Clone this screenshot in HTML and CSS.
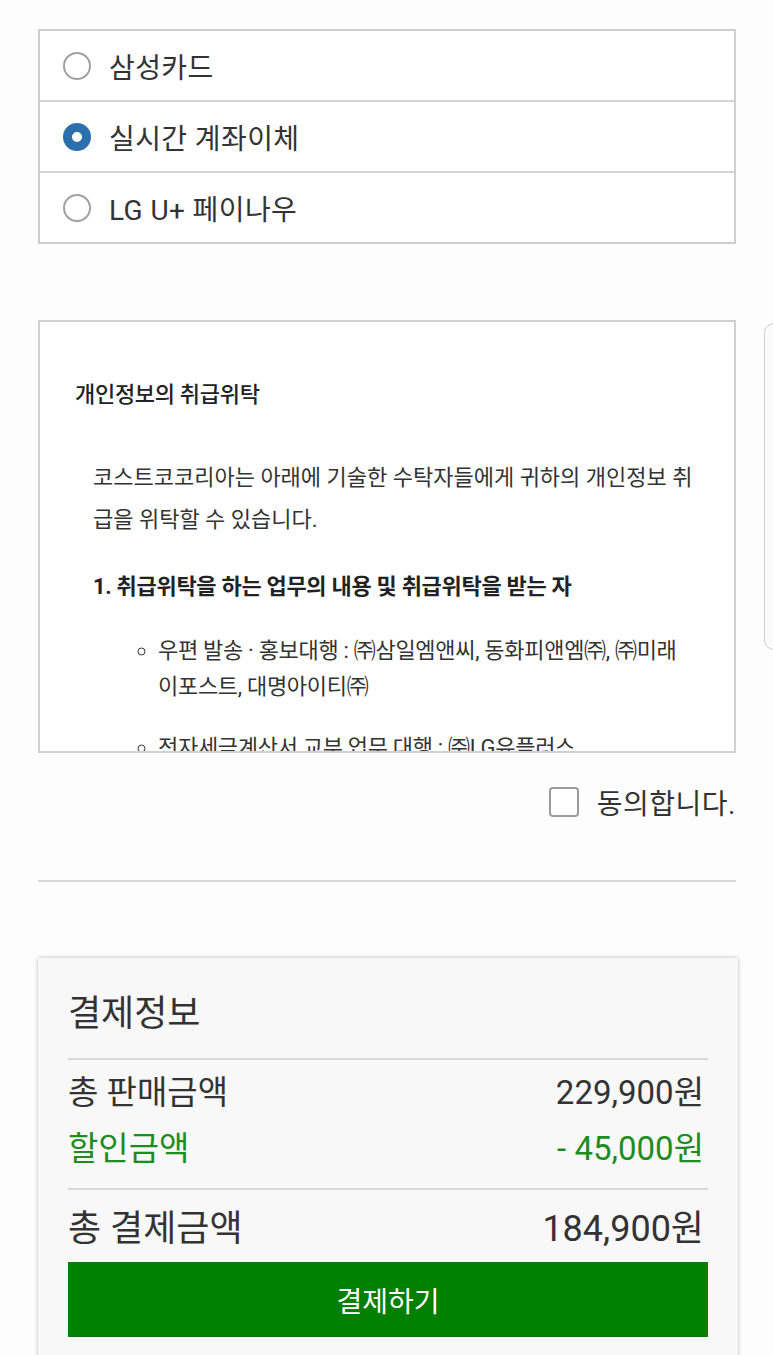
FILE: index.html
```html
<!DOCTYPE html>
<html lang="ko">
<head>
<meta charset="utf-8">
<title>결제</title>
<link rel="stylesheet" href="styles.css">
</head>
<body>
<div class="page">
  <div class="methods">
    <label class="method"><span class="radio"></span><span class="method-label">삼성카드</span></label>
    <label class="method"><span class="radio checked"></span><span class="method-label">실시간 계좌이체</span></label>
    <label class="method"><span class="radio"></span><span class="method-label">LG U+ 페이나우</span></label>
  </div>

  <div class="terms">
    <h3 class="terms-title">개인정보의 취급위탁</h3>
    <p class="terms-text">코스트코코리아는 아래에 기술한 수탁자들에게 귀하의 개인정보 취급을 위탁할 수 있습니다.</p>
    <p class="terms-head">1. 취급위탁을 하는 업무의 내용 및 취급위탁을 받는 자</p>
    <ul class="terms-list">
      <li>우편 발송 · 홍보대행 : ㈜삼일엠앤씨, 동화피앤엠㈜, ㈜미래이포스트, 대명아이티㈜</li>
      <li>전자세금계산서 교부 업무 대행 : ㈜LG유플러스</li>
    </ul>
  </div>

  <div class="agree">
    <span class="checkbox"></span><span class="agree-label">동의합니다.</span>
  </div>

  <hr class="divider">

  <div class="summary">
    <h2 class="summary-title">결제정보</h2>
    <div class="rows">
      <div class="row"><span>총 판매금액</span><span>229,900원</span></div>
      <div class="row discount"><span>할인금액</span><span>- 45,000원</span></div>
    </div>
    <div class="row total"><span>총 결제금액</span><span>184,900원</span></div>
    <button class="pay">결제하기</button>
  </div>
</div>
<div class="edge-handle"></div>
</body>
</html>
```
FILE: styles.css
```css
html, body {
  margin: 0;
  padding: 0;
  background: #fdfdfd;
}
body {
  font-family: Roboto, "Noto Sans CJK KR", sans-serif;
  color: #2b2b2b;
  height: 1355px;
  overflow: hidden;
}
.page {
  width: 698px;
  margin-left: 38px;
  padding-top: 29px;
}
.methods {
  border: 2px solid #cfcfcf;
  background: #fff;
}
.method {
  display: flex;
  align-items: center;
  height: 69px;
  padding-left: 23px;
  border-top: 2px solid #d3d3d3;
}
.method:first-child {
  border-top: none;
}
.radio {
  width: 24px;
  height: 24px;
  border: 2px solid #a0a0a0;
  border-radius: 50%;
  box-sizing: content-box;
  flex: none;
  background: #fff;
}
.radio.checked {
  border: 9px solid #2c6fad;
  width: 10px;
  height: 10px;
}
.method-label {
  margin-left: 18px;
  font-size: 28px;
  color: #333;
  letter-spacing: 0.4px;
}
.terms {
  margin-top: 76px;
  height: 433px;
  border: 2px solid #d0d0d0;
  background: #fff;
  overflow: hidden;
  padding: 0 30px 0 35px;
  box-sizing: border-box;
}
.terms-title {
  margin: 58px 0 0;
  font-size: 22px;
  font-weight: 500;
  line-height: 30px;
  color: #222;
  letter-spacing: -0.3px;
}
.terms-text {
  margin: 47px 0 0 18px;
  font-size: 22px;
  line-height: 42px;
  color: #333;
  letter-spacing: 0;
}
.terms-head {
  margin: 31px 0 0 18px;
  font-size: 22px;
  font-weight: 700;
  line-height: 30px;
  color: #222;
  letter-spacing: -0.3px;
}
.terms-list {
  margin: 31px 12px 0 18px;
  padding: 0 0 0 65px;
  list-style: circle;
  font-size: 22px;
  line-height: 36px;
  color: #333;
  letter-spacing: -0.3px;
}
.terms-list li {
  margin-bottom: 25px;
  padding-left: 0;
}
.agree {
  display: flex;
  justify-content: flex-end;
  align-items: center;
  margin-top: 33px;
  height: 32px;
}
.checkbox {
  width: 26px;
  height: 26px;
  border: 2px solid #9c9c9c;
  border-radius: 4px;
  background: #fff;
}
.agree-label {
  margin-left: 18px;
  font-size: 28px;
  color: #333;
  letter-spacing: 0.5px;
}
.divider {
  margin: 62px 0 0;
  border: none;
  border-top: 2px solid #d8d8d8;
  height: 0;
}
.summary {
  margin-top: 76px;
  width: 700px;
  background: #f8f8f8;
  box-shadow: 0 0 4px rgba(0,0,0,0.28);
  padding: 20px 30px 40px;
  box-sizing: border-box;
}
.summary-title {
  margin: 0;
  font-size: 36px;
  font-weight: 400;
  line-height: 72px;
  color: #333;
  padding-bottom: 8px;
  border-bottom: 2px solid #dadada;
}
.rows {
  padding: 5px 0 11px;
  border-bottom: 2px solid #dadada;
}
.row {
  display: flex;
  justify-content: space-between;
  align-items: center;
  font-size: 33px;
  line-height: 56px;
  color: #333;
  padding-right: 4px;
}
.row.discount {
  color: #1e8c1e;
}
.row.total {
  font-size: 36px;
  line-height: 66px;
  padding-top: 6px;
}
.pay {
  display: block;
  width: 100%;
  height: 75px;
  border: none;
  background: #007f00;
  color: #fff;
  font-family: Roboto, "Noto Sans CJK KR", sans-serif;
  font-size: 28px;
  margin-top: 0;
}
.edge-handle {
  position: absolute;
  left: 764px;
  top: 323px;
  width: 20px;
  height: 325px;
  border: 1px solid #cfcfcf;
  border-radius: 10px;
  background: #fafafa;
}
```
